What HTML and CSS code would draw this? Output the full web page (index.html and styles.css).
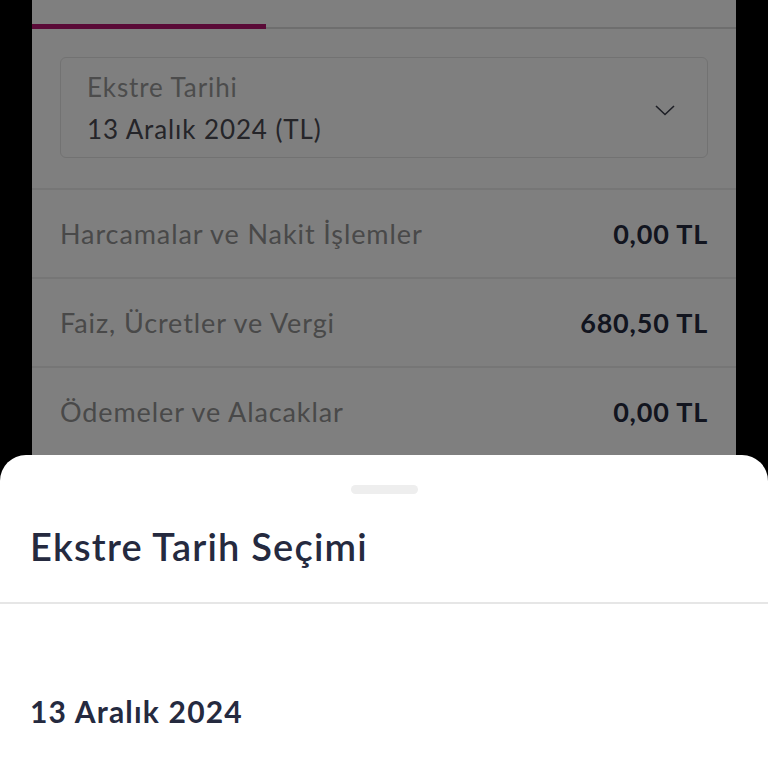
FILE: index.html
```html
<!DOCTYPE html>
<html lang="tr">
<head>
  <meta charset="UTF-8">
  <meta name="viewport" content="width=device-width, initial-scale=1.0">
  <title>Ekstre</title>
  <link rel="stylesheet" href="styles.css">
</head>
<body>
  <div class="screen">
    <div class="tabs">
      <div class="tab active"></div>
      <div class="tab"></div>
      <div class="tab"></div>
    </div>

    <div class="select-wrap">
      <div class="select">
        <div class="select-text">
          <div class="select-label">Ekstre Tarihi</div>
          <div class="select-value">13 Aralık 2024 (TL)</div>
        </div>
        <svg class="chevron" width="20" height="11" viewBox="0 0 20 11">
          <path d="M1 1 L10 9.5 L19 1" fill="none" stroke="#3a3d4a" stroke-width="1.6"/>
        </svg>
      </div>
    </div>

    <ul class="summary">
      <li><span>Harcamalar ve Nakit İşlemler</span><b>0,00 TL</b></li>
      <li><span>Faiz, Ücretler ve Vergi</span><b>680,50 TL</b></li>
      <li><span>Ödemeler ve Alacaklar</span><b>0,00 TL</b></li>
    </ul>

    <div class="overlay"></div>
  </div>

  <div class="sheet">
    <div class="handle"></div>
    <h2 class="sheet-title">Ekstre Tarih Seçimi</h2>
    <ul class="dates">
      <li>13 Aralık 2024</li>
    </ul>
  </div>
</body>
</html>
```

FILE: styles.css
```css
body, html {
  margin: 0;
  padding: 0;
  font-family: Lato, "Noto Sans", sans-serif;
  background-color: #000;
  height: 100%;
  overflow: hidden;
}

.screen {
  position: relative;
  margin: 0 32px;
  height: 100vh;
  background-color: #fff;
}

.tabs {
  display: flex;
  height: 29px;
  border-bottom: 2px solid #ddd;
  box-sizing: border-box;
}

.tab {
  width: 234px;
}

.tab.active {
  border-bottom: 5px solid #b4146e;
  margin-bottom: -2px;
}

.select-wrap {
  padding: 28px 28px 30px;
  border-bottom: 2px solid #ececec;
}

.select {
  display: flex;
  align-items: flex-start;
  justify-content: space-between;
  height: 101px;
  box-sizing: border-box;
  border: 1px solid #e4e4e4;
  border-radius: 6px;
  padding: 13px 32px 0 26px;
}

.select-label {
  font-size: 26px;
  letter-spacing: 0.9px;
  color: #999;
  line-height: 32px;
}

.select-value {
  font-size: 26px;
  letter-spacing: 0.9px;
  color: #4a4a52;
  line-height: 32px;
  margin-top: 10px;
}

.chevron {
  align-self: center;
  margin-top: -8px;
}

.summary {
  list-style-type: none;
  margin: 0;
  padding: 0;
}

.summary li {
  display: flex;
  justify-content: space-between;
  align-items: center;
  padding: 0 28px;
  box-sizing: border-box;
  border-bottom: 2px solid #ececec;
  height: 89px;
  font-size: 27px;
  letter-spacing: 0.9px;
}

.summary li span {
  color: #929292;
}

.summary li b {
  color: #252a3f;
  font-weight: 700;
  letter-spacing: 0.8px;
}

.overlay {
  position: absolute;
  inset: 0;
  background-color: rgba(0, 0, 0, 0.5);
}

.sheet {
  position: absolute;
  left: 0;
  right: 0;
  top: 455px;
  bottom: 0;
  background-color: #fff;
  border-radius: 26px 26px 0 0;
  overflow: hidden;
}

.handle {
  width: 67px;
  height: 9px;
  margin: 30px auto 0;
  border-radius: 5px;
  background-color: #eeeeee;
}

.sheet-title {
  margin: 0;
  padding: 27px 30px 0;
  height: 81px;
  font-size: 38px;
  font-weight: 600;
  letter-spacing: 1.2px;
  color: #252a3f;
  border-bottom: 2px solid #e6e6e6;
  line-height: 50px;
}

.dates {
  list-style-type: none;
  margin: 0;
  padding: 0 30px;
}

.dates li {
  padding: 87px 0 0;
  font-size: 30px;
  font-weight: 700;
  letter-spacing: 1.2px;
  color: #252a3f;
  line-height: 40px;
}
```
